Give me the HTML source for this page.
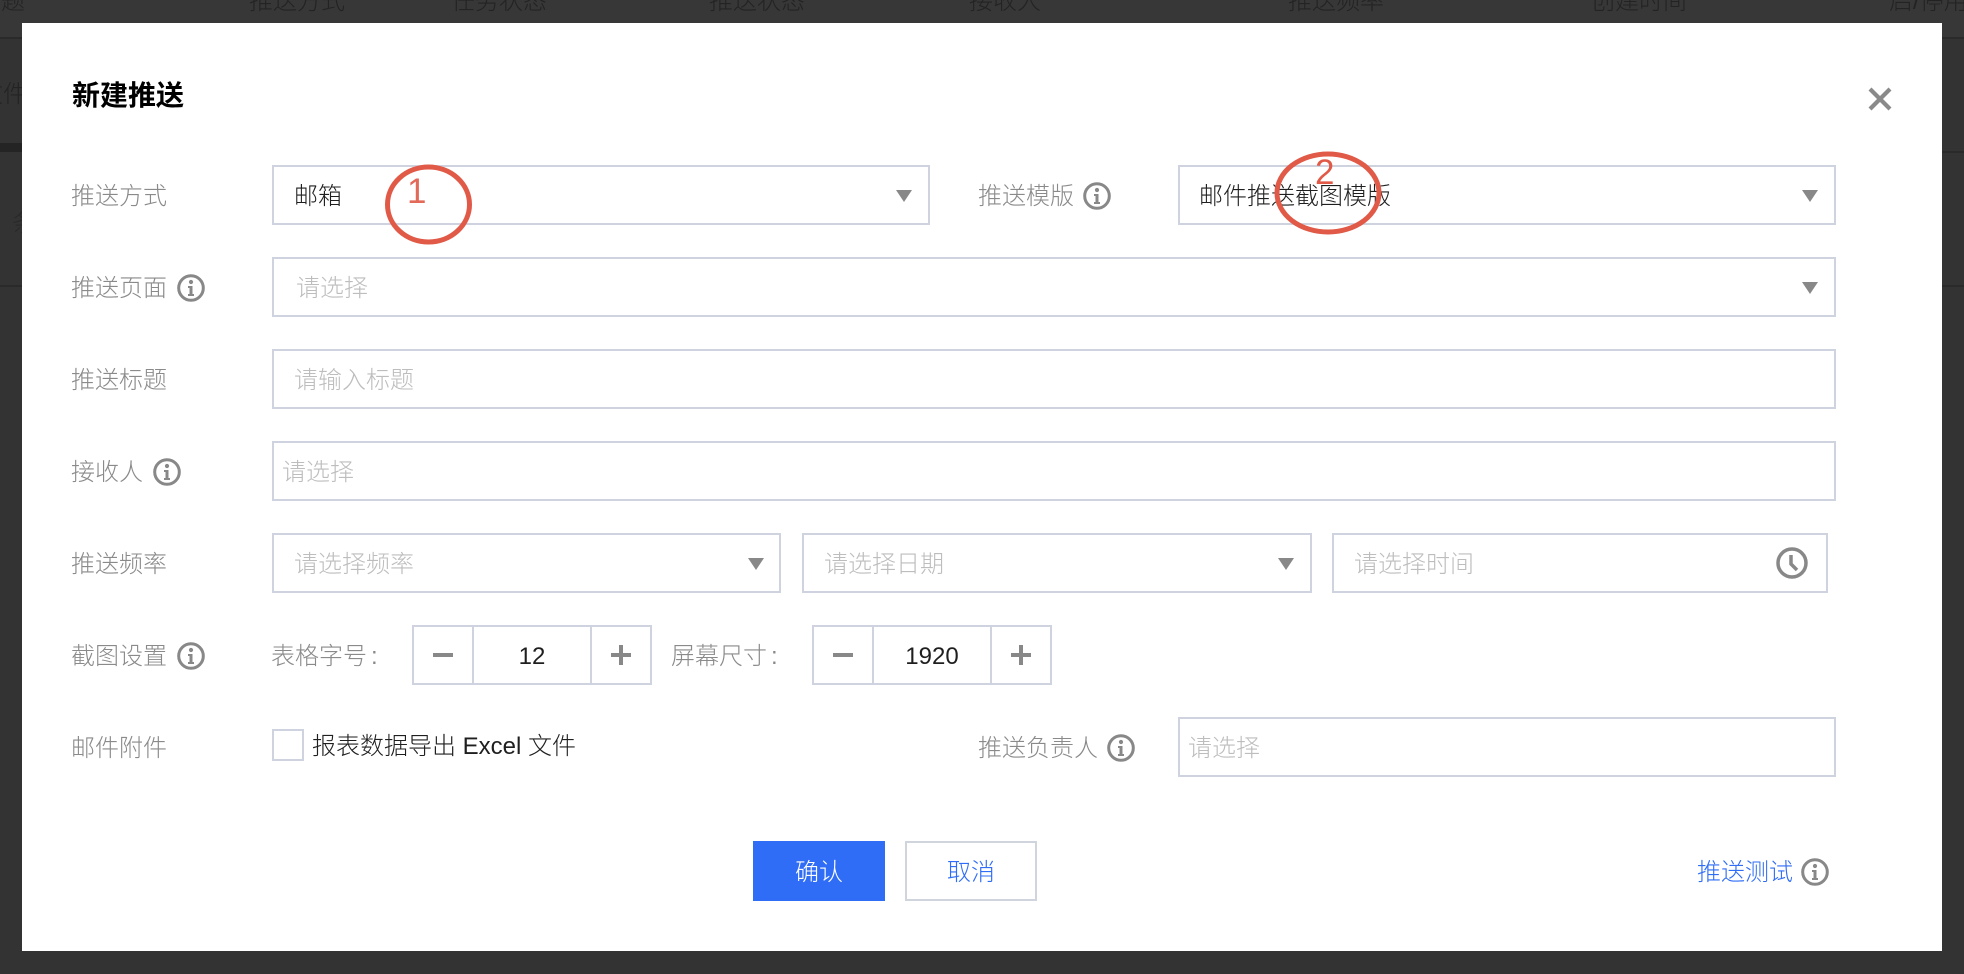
<!DOCTYPE html>
<html lang="zh-CN">
<head>
<meta charset="utf-8">
<title>新建推送</title>
<style>
html,body{margin:0;padding:0;width:1964px;height:974px;overflow:hidden;background:#333334}
*{box-sizing:border-box}
body{position:relative;font-family:"Liberation Sans","Noto Sans CJK SC",sans-serif;font-size:24px;font-weight:300}
.t{position:absolute;height:60px;line-height:64px;white-space:nowrap;margin-left:-1px}
.bg{color:#232323;font-size:24px}
.l{color:#8a8a8a}
.p{color:#bdbdbd}
.k{color:#1f1f1f}
.c{margin-left:0;text-align:center}
.b{position:absolute;background:#fff;border:2px solid #cfd3df}
.ln{position:absolute;background:#2a2a2a}
#dlg{position:absolute;left:22px;top:23px;width:1920px;height:928px;background:#fff}
.arr{position:absolute;width:0;height:0;border-left:8px solid transparent;border-right:8px solid transparent;border-top:12px solid #888}
.ic{position:absolute;width:28px;height:28px}
.bar{position:absolute;background:#888}
.dv{position:absolute;background:#cfd3df;width:2px;top:625px;height:60px}
.col{margin-left:4px;font-family:"Liberation Sans",sans-serif}
</style>
</head>
<body>
<div style="position:absolute;left:0;top:0;width:1964px;height:37px;background:#373737"></div>
<div class="ln" style="left:0;top:37px;width:1964px;height:2px"></div>
<div class="ln" style="left:0;top:143px;width:22px;height:9px;background:#242424"></div>
<div class="ln" style="left:1942px;top:151px;width:22px;height:2px"></div>
<div class="ln" style="left:0;top:285px;width:1964px;height:2px"></div>
<div class="t bg" style="left:2px;top:-30px">题</div>
<div class="t bg" style="left:250px;top:-30px">推送方式</div>
<div class="t bg" style="left:452px;top:-30px">任务状态</div>
<div class="t bg" style="left:710px;top:-30px">推送状态</div>
<div class="t bg" style="left:970px;top:-30px">接收人</div>
<div class="t bg" style="left:1289px;top:-30px">推送频率</div>
<div class="t bg" style="left:1592px;top:-30px">创建时间</div>
<div class="t bg" style="left:1890px;top:-30px">启/停用</div>
<div class="t bg" style="left:-20px;top:63px">文件</div>
<div class="t bg" style="left:13px;top:192px;color:#292929">条</div>

<div id="dlg"></div>

<div class="t" style="left:73px;top:65px;font-size:28px;line-height:62px;font-weight:700;color:#000">新建推送</div>
<svg style="position:absolute;left:1866px;top:85px" width="28" height="28" viewBox="0 0 28 28"><path d="M4 4L24 24M24 4L4 24" stroke="#8a8a8a" stroke-width="4.2" fill="none"/></svg>

<!-- row 1 -->
<div class="t l" style="left:72px;top:165px">推送方式</div>
<div class="b" style="left:272px;top:165px;width:658px;height:60px"></div>
<div class="t k" style="left:295px;top:165px">邮箱</div>
<div class="arr" style="left:896px;top:190px"></div>
<div class="t l" style="left:979px;top:165px">推送模版</div>
<svg class="ic" style="left:1083px;top:182px" viewBox="0 0 28 28"><circle cx="14" cy="14" r="12.3" fill="none" stroke="#888" stroke-width="3"/><circle cx="14" cy="8" r="2.1" fill="#888"/><path d="M11 12h4.500v8h1.500v2h-6v-2h1.500v-6h-1.500z" fill="#888"/></svg>
<div class="b" style="left:1178px;top:165px;width:658px;height:60px"></div>
<div class="t k" style="left:1200px;top:165px">邮件推送截图模版</div>
<div class="arr" style="left:1802px;top:190px"></div>

<!-- row 2 -->
<div class="t l" style="left:72px;top:257px">推送页面</div>
<svg class="ic" style="left:177px;top:274px" viewBox="0 0 28 28"><circle cx="14" cy="14" r="12.3" fill="none" stroke="#888" stroke-width="3"/><circle cx="14" cy="8" r="2.1" fill="#888"/><path d="M11 12h4.500v8h1.500v2h-6v-2h1.500v-6h-1.500z" fill="#888"/></svg>
<div class="b" style="left:272px;top:257px;width:1564px;height:60px"></div>
<div class="t p" style="left:297px;top:257px">请选择</div>
<div class="arr" style="left:1802px;top:282px"></div>

<!-- row 3 -->
<div class="t l" style="left:72px;top:349px">推送标题</div>
<div class="b" style="left:272px;top:349px;width:1564px;height:60px"></div>
<div class="t p" style="left:295px;top:349px">请输入标题</div>

<!-- row 4 -->
<div class="t l" style="left:72px;top:441px">接收人</div>
<svg class="ic" style="left:153px;top:458px" viewBox="0 0 28 28"><circle cx="14" cy="14" r="12.3" fill="none" stroke="#888" stroke-width="3"/><circle cx="14" cy="8" r="2.1" fill="#888"/><path d="M11 12h4.500v8h1.500v2h-6v-2h1.500v-6h-1.500z" fill="#888"/></svg>
<div class="b" style="left:272px;top:441px;width:1564px;height:60px"></div>
<div class="t p" style="left:283px;top:441px">请选择</div>

<!-- row 5 -->
<div class="t l" style="left:72px;top:533px">推送频率</div>
<div class="b" style="left:272px;top:533px;width:509px;height:60px"></div>
<div class="t p" style="left:295px;top:533px">请选择频率</div>
<div class="arr" style="left:748px;top:558px"></div>
<div class="b" style="left:802px;top:533px;width:510px;height:60px"></div>
<div class="t p" style="left:825px;top:533px">请选择日期</div>
<div class="arr" style="left:1278px;top:558px"></div>
<div class="b" style="left:1332px;top:533px;width:496px;height:60px"></div>
<div class="t p" style="left:1355px;top:533px">请选择时间</div>
<svg style="position:absolute;left:1775px;top:546px" width="34" height="34" viewBox="0 0 34 34"><circle cx="17" cy="17" r="14" fill="none" stroke="#888" stroke-width="3.500"/><path d="M16 9v9l6 6" fill="none" stroke="#888" stroke-width="3.500"/></svg>

<!-- row 6 -->
<div class="t l" style="left:72px;top:625px">截图设置</div>
<svg class="ic" style="left:177px;top:642px" viewBox="0 0 28 28"><circle cx="14" cy="14" r="12.3" fill="none" stroke="#888" stroke-width="3"/><circle cx="14" cy="8" r="2.1" fill="#888"/><path d="M11 12h4.500v8h1.500v2h-6v-2h1.500v-6h-1.500z" fill="#888"/></svg>
<div class="t l" style="left:272px;top:625px">表格字号<span class="col">:</span></div>
<div class="b" style="left:412px;top:625px;width:240px;height:60px"></div>
<div class="dv" style="left:472px"></div>
<div class="dv" style="left:590px"></div>
<div class="bar" style="left:433px;top:653px;width:20px;height:4px"></div>
<div class="t k c" style="left:474px;top:625px;width:116px">12</div>
<div class="bar" style="left:611px;top:653px;width:20px;height:4px"></div>
<div class="bar" style="left:619px;top:645px;width:4px;height:20px"></div>
<div class="t l" style="left:672px;top:625px">屏幕尺寸<span class="col">:</span></div>
<div class="b" style="left:812px;top:625px;width:240px;height:60px"></div>
<div class="dv" style="left:872px"></div>
<div class="dv" style="left:990px"></div>
<div class="bar" style="left:833px;top:653px;width:20px;height:4px"></div>
<div class="t k c" style="left:874px;top:625px;width:116px">1920</div>
<div class="bar" style="left:1011px;top:653px;width:20px;height:4px"></div>
<div class="bar" style="left:1019px;top:645px;width:4px;height:20px"></div>

<!-- row 7 -->
<div class="t l" style="left:72px;top:717px">邮件附件</div>
<div class="b" style="left:272px;top:729px;width:32px;height:32px"></div>
<div class="t k" style="left:313px;top:715px">报表数据导出 Excel 文件</div>
<div class="t l" style="left:979px;top:717px">推送负责人</div>
<svg class="ic" style="left:1107px;top:734px" viewBox="0 0 28 28"><circle cx="14" cy="14" r="12.3" fill="none" stroke="#888" stroke-width="3"/><circle cx="14" cy="8" r="2.1" fill="#888"/><path d="M11 12h4.500v8h1.500v2h-6v-2h1.500v-6h-1.500z" fill="#888"/></svg>
<div class="b" style="left:1178px;top:717px;width:658px;height:60px"></div>
<div class="t p" style="left:1189px;top:717px">请选择</div>

<!-- buttons -->
<div style="position:absolute;left:753px;top:841px;width:132px;height:60px;background:#2f6df6"></div>
<div class="t c" style="left:753px;top:841px;width:132px;color:#fff">确认</div>
<div class="b" style="left:905px;top:841px;width:132px;height:60px;border-color:#d0d5dd"></div>
<div class="t c" style="left:905px;top:841px;width:132px;color:#2f6df6">取消</div>
<div class="t" style="left:1698px;top:841px;color:#2f6df6">推送测试</div>
<svg class="ic" style="left:1801px;top:858px" viewBox="0 0 28 28"><circle cx="14" cy="14" r="12.3" fill="none" stroke="#888" stroke-width="3"/><circle cx="14" cy="8" r="2.1" fill="#888"/><path d="M11 12h4.500v8h1.500v2h-6v-2h1.500v-6h-1.500z" fill="#888"/></svg>

<!-- annotations -->
<svg style="position:absolute;left:0;top:0;pointer-events:none" width="1964" height="974" viewBox="0 0 1964 974">
<ellipse cx="428.500" cy="204.500" rx="41" ry="37.500" fill="none" stroke="#e05a47" stroke-width="5"/>
<ellipse cx="1328" cy="193" rx="51" ry="39" fill="none" stroke="#e05a47" stroke-width="5"/>
<text x="407" y="203" font-family="'Liberation Sans',sans-serif" font-size="35" fill="#e05a47" fill-opacity="0.9">1</text>
<text x="1315" y="184" font-family="'Liberation Sans',sans-serif" font-size="35" fill="#e05a47">2</text>
</svg>
</body>
</html>
